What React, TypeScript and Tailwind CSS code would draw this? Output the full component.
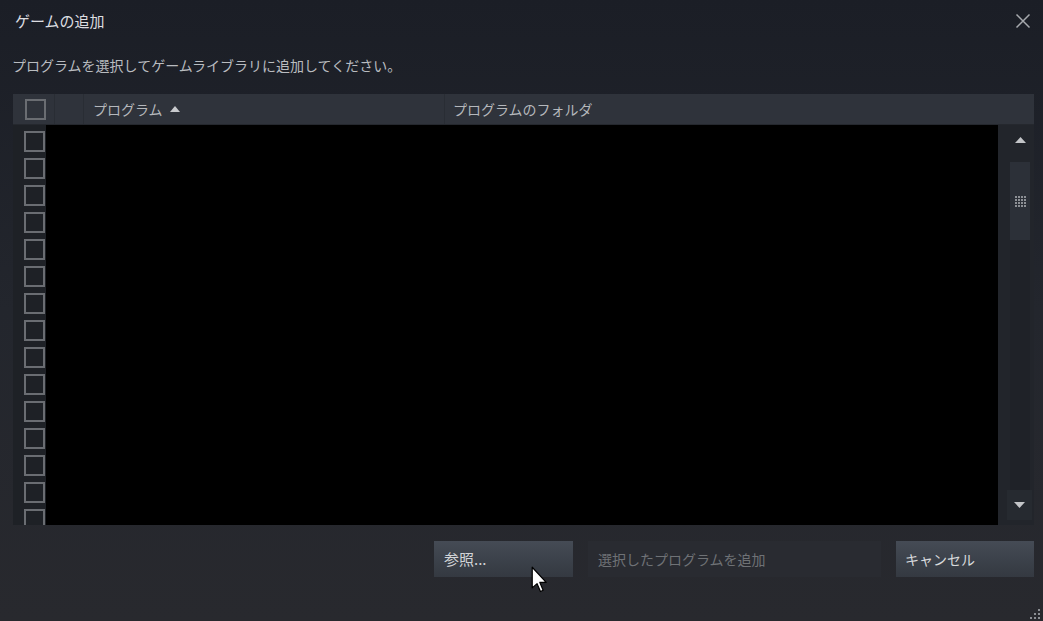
import React from 'react'

const jp = { fontFamily: '"Noto Sans CJK JP", "Noto Sans", sans-serif' }

const Box = ({ className = '' }: { className?: string }) => (
    <div className={`w-[21px] h-[21px] shrink-0 border-2 border-[#6a6d72] ${className}`} />
)

const rows = Array.from({ length: 15 })

const App = () => {
    return (
        <div
            className="relative w-[1043px] h-[621px] overflow-hidden bg-gradient-to-b from-[#1b1e26] via-[#23262d] to-[#28292e] text-[#d6d8db]"
            style={jp}
        >
            {/* title bar */}
            <div className="flex items-center justify-between h-[42px] pl-[15px] pr-[11px]">
                <h1 className="text-[15px] text-[#dcdde0]">ゲームの追加</h1>
                <button type="button" className="w-[18px] h-[18px] flex items-center justify-center text-[#a7aaae]">
                    <svg width="16" height="16" viewBox="0 0 16 16" fill="none" stroke="currentColor" strokeWidth="1.5">
                        <path d="M1.5 1.5 L14.5 14.5 M14.5 1.5 L1.5 14.5" />
                    </svg>
                </button>
            </div>

            <p className="mt-[13px] pl-[12px] text-[14px] leading-[20px] text-[#b9bcc0]">プログラムを選択してゲームライブラリに追加してください。</p>

            {/* table */}
            <div className="mt-[19px] ml-[13px] w-[1021px] h-[431px] flex flex-col">
                <div className="h-[31px] flex bg-[#2f333b] border-b border-[#25282e] text-[14px] text-[#b5b8bc]">
                    <div className="w-[42px] flex items-center pl-[12px] border-r border-[#292d34]">
                        <Box />
                    </div>
                    <div className="w-[29px] border-r border-[#292d34]" />
                    <div className="w-[361px] flex items-center gap-[7px] pl-[9px] border-r border-[#292d34]">
                        <span>プログラム</span>
                        <svg width="10" height="6" viewBox="0 0 10 6" fill="#c8cacd">
                            <path d="M0 6 L5 0 L10 6 Z" />
                        </svg>
                    </div>
                    <div className="flex-1 flex items-center pl-[8px]">プログラムのフォルダ</div>
                </div>

                <div className="flex h-[400px]">
                    <div className="w-[33px] bg-[#1e2126] flex flex-col gap-[6px] pt-[6px] pl-[11px] overflow-hidden">
                        {rows.map((_, i) => (
                            <Box key={i} />
                        ))}
                    </div>
                    <div className="w-[952px] bg-black" />
                    <div className="flex-1 bg-[#22252b] flex flex-col">
                        <div className="h-[37px] flex items-start justify-center pl-[8px] pt-[12px]">
                            <svg width="11" height="6" viewBox="0 0 11 6" fill="#c3c5c8">
                                <path d="M0 6 L5.5 0 L11 6 Z" />
                            </svg>
                        </div>
                        <div className="flex-1 ml-[12px] mr-[4px] bg-[#1f2228] flex flex-col">
                            <div className="h-[78px] bg-[#2c3038] flex items-center justify-center">
                                <div className="grid grid-cols-4 gap-[1px]">
                                    {Array.from({ length: 16 }).map((_, i) => (
                                        <div key={i} className="w-[2px] h-[2px] bg-[#8d9096]" />
                                    ))}
                                </div>
                            </div>
                        </div>
                        <div className="h-[30px] ml-[9px] mr-[2px] mb-[5px] bg-[#262a30] flex items-center justify-center">
                            <svg width="11" height="6" viewBox="0 0 11 6" fill="#c3c5c8">
                                <path d="M0 0 L5.5 6 L11 0 Z" />
                            </svg>
                        </div>
                    </div>
                </div>
            </div>

            {/* buttons */}
            <div className="mt-[16px] flex justify-end gap-[15px] pr-[9px] text-[14px]">
                <button type="button" className="w-[139px] h-[36px] text-left pl-[10px] bg-gradient-to-b from-[#454b55] to-[#343941] text-[#d2d4d7] text-[15px]">
                    参照...
                </button>
                <button type="button" className="w-[293px] h-[36px] text-left pl-[10px] bg-[#292b31] text-[#6f7276]">
                    選択したプログラムを追加
                </button>
                <button type="button" className="w-[138px] h-[36px] text-left pl-[9px] bg-gradient-to-b from-[#454b55] to-[#343941] text-[#d8dadc]">
                    キャンセル
                </button>
            </div>

            {/* mouse cursor */}
            <svg className="absolute left-[531px] top-[566px]" width="17" height="28" viewBox="0 0 14 23">
                <path d="M1 1 L1 18 L5 14.5 L7.8 21 L10 20 L7.3 13.5 L12.5 13.5 Z" fill="#ffffff" stroke="#000000" strokeWidth="1" strokeLinejoin="round" />
            </svg>

            {/* resize grip */}
            <div className="absolute right-[3px] bottom-[2px] flex flex-col items-end gap-[2px]">
                <div className="flex gap-[2px]"><span className="w-[2px] h-[2px] bg-[#8b8e93]" /></div>
                <div className="flex gap-[2px]"><span className="w-[2px] h-[2px] bg-[#8b8e93]" /><span className="w-[2px] h-[2px] bg-[#8b8e93]" /></div>
                <div className="flex gap-[2px]"><span className="w-[2px] h-[2px] bg-[#8b8e93]" /><span className="w-[2px] h-[2px] bg-[#8b8e93]" /><span className="w-[2px] h-[2px] bg-[#8b8e93]" /></div>
            </div>
        </div>
    )
}

export default App
